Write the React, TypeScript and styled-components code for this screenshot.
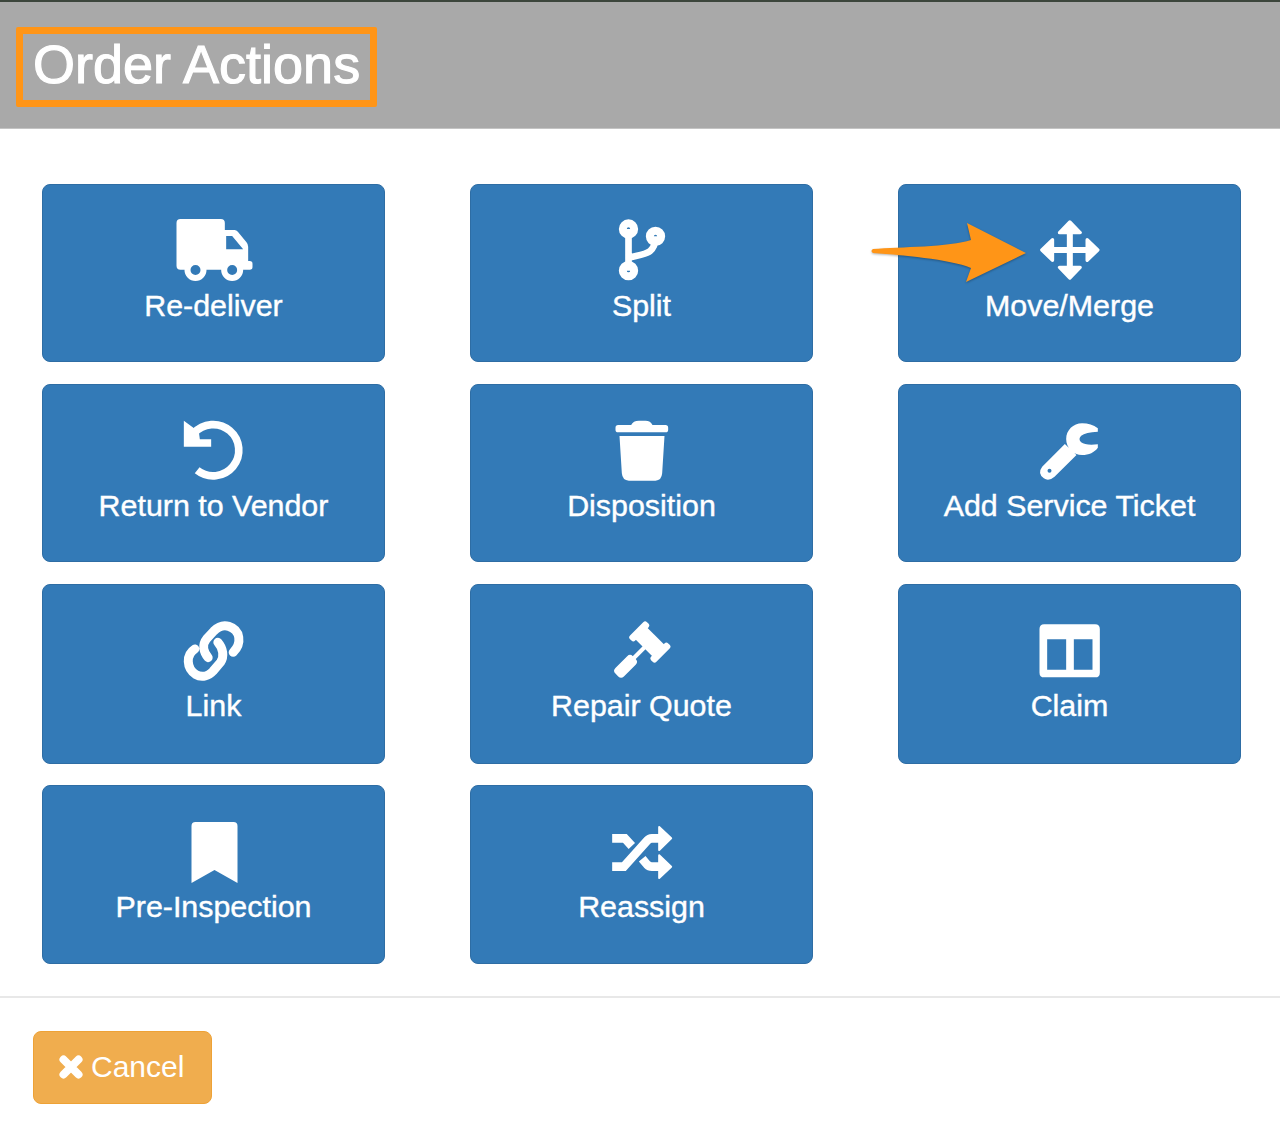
import React from "react";
import styled, { createGlobalStyle } from "styled-components";

const BLUE = "#337ab7";

const Global = createGlobalStyle`
  html, body { margin: 0; padding: 0; background: #fff; }
  body { font-family: "Liberation Sans", Arial, sans-serif; }
`;

const Page = styled.div`
  position: relative;
  width: 1280px;
  height: 1121px;
  background: #fff;
  overflow: hidden;
`;

const Header = styled.header`
  box-sizing: border-box;
  height: 129px;
  padding: 25px 0 0 16px;
  background: #a9a9a9;
  border-top: 2px solid #3c463c;
  border-bottom: 1px solid #c4c4c4;
`;

const Title = styled.h1`
  box-sizing: border-box;
  display: inline-block;
  width: 361px;
  height: 80px;
  margin: 0;
  padding: 0 0 0 10px;
  border: 7px solid #ff9517;
  border-radius: 2px;
  color: #fff;
  font-size: 54px;
  font-weight: 400;
  line-height: 61px;
  white-space: nowrap;
  -webkit-text-stroke: 1.1px #fff;
`;

const Grid = styled.main`
  display: grid;
  grid-template-columns: repeat(3, 343px);
  grid-template-rows: 178px 178px 180px 178.75px;
  column-gap: 85px;
  row-gap: 21.75px;
  padding: 55px 0 0 42px;
`;

const ActionButton = styled.button`
  box-sizing: border-box;
  display: flex;
  flex-direction: column;
  align-items: center;
  padding: 20px 0 0;
  background: ${BLUE};
  border: 1px solid #2e6da4;
  border-radius: 8px;
  color: #fff;
  font-family: inherit;
`;

const Icon = styled.svg`
  display: block;
  width: 110px;
  height: 90px;
  flex: none;
`;

const Label = styled.span`
  font-size: 30.4px;
  line-height: 20px;
  white-space: nowrap;
  -webkit-text-stroke: 0.4px #fff;
`;

const Footer = styled.footer`
  margin-top: 32px;
  padding: 33px 0 0 33px;
  border-top: 2px solid #e8e8e8;
`;

const CancelButton = styled.button`
  box-sizing: border-box;
  display: flex;
  align-items: center;
  gap: 8px;
  width: 179px;
  height: 73px;
  padding: 0 0 2px 25px;
  background: #f0ad4e;
  border: 1px solid #eea236;
  border-radius: 8px;
  color: #fff;
  font-family: inherit;
  font-size: 30px;
`;

const CancelIcon = styled.svg`
  display: block;
  width: 24px;
  height: 24px;
  flex: none;
`;

const ArrowOverlay = styled.svg`
  position: absolute;
  left: 860px;
  top: 210px;
  width: 180px;
  height: 85px;
  filter: drop-shadow(0 1px 1px rgba(0, 0, 0, 0.3));
`;

const W = "#fff";

const Truck = () => (
  <>
    <path
      fill={W}
      fillRule="evenodd"
      d="M60 42H181Q193 42 193 54V75H222Q228 75 232 80L258 112Q263 118 263 125V168H268Q276 168 276 176V186Q276 194 268 194H100L60 194Q48 194 48 182V54Q48 42 60 42ZM197 93V133H248L215 93Z"
    />
    <circle cx="105" cy="195" r="24" fill={BLUE} stroke={W} strokeWidth="18" />
    <circle cx="215" cy="195" r="24" fill={BLUE} stroke={W} strokeWidth="18" />
  </>
);

const Split = () => (
  <>
    <path fill="none" stroke={W} strokeWidth="20" d="M114 72V197M195 94C195 150 160 146 114 158" />
    <path
      fill={W}
      fillRule="evenodd"
      d="M85 72a29 29 0 1 0 58 0a29 29 0 1 0-58 0ZM109 72a5 5 0 1 1 10 0a5 5 0 1 1-10 0ZM166 94a29 29 0 1 0 58 0a29 29 0 1 0-58 0ZM190 94a5 5 0 1 1 10 0a5 5 0 1 1-10 0ZM85 197a29 29 0 1 0 58 0a29 29 0 1 0-58 0ZM109 197a5 5 0 1 1 10 0a5 5 0 1 1-10 0Z"
    />
  </>
);

const Move = () => (
  <path
    fill={W}
    stroke={W}
    strokeWidth="10"
    strokeLinejoin="round"
    transform="translate(148 135)"
    d="M0-84L31-52H4V-4H52V-31L84 0L52 31V4H4V52H31L0 84L-31 52H-4V4H-52V31L-84 0L-52-31V-4H-4V-52H-31Z"
  />
);

const Undo = () => (
  <>
    <path fill="none" stroke={W} strokeWidth="23" d="M100 85A77 77 0 1 1 110 196" />
    <path fill={W} d="M70 47L152 103V125H70ZM70 47L115 80L118 103H152Z" />
  </>
);

const Trash = () => (
  <path
    fill={W}
    d="M83 60H122Q128 47 145 47H165Q180 47 186 60H225Q233 60 233 68V74Q233 82 225 82H83Q75 82 75 74V68Q75 60 83 60ZM87 93H222L215 205Q213 227 195 227H115Q96 227 94 205Z"
  />
);

const Wrench = () => (
  <>
    <path
      fill={W}
      d="M232 70Q212 55 185 55C158 55 137 76 137 102C137 128 158 150 185 150C205 150 222 142 232 128V118Q195 122 182 112Q172 102 182 92Q195 82 232 80ZM133 117L65 185Q50 205 70 220Q85 230 102 215L168 150Z"
    />
    <circle cx="87" cy="197" r="6" fill={BLUE} />
  </>
);

const LinkIcon = () => (
  <path
    fill="none"
    stroke={W}
    strokeWidth="27"
    strokeLinecap="round"
    d="M218 142C245 115 240 75 205 64C185 58 172 66 160 78L138 102C125 118 128 140 143 158M103 132C75 150 78 190 105 208C125 220 145 212 158 198L180 172C192 155 188 130 172 112"
  />
);

const Gavel = () => (
  <g fill={W} transform="translate(178 111) rotate(45)">
    <rect x="-56" y="-36" width="22" height="72" rx="8" />
    <rect x="34" y="-36" width="22" height="72" rx="8" />
    <rect x="-42" y="-25" width="84" height="50" />
    <rect x="-6" y="20" width="12" height="50" />
    <rect x="-18" y="66" width="36" height="74" rx="12" />
  </g>
);

const Columns = () => (
  <path
    fill={W}
    fillRule="evenodd"
    d="M71 58H224Q238 58 238 72V203Q238 217 224 217H71Q57 217 57 203V72Q57 58 71 58ZM80 103V194H137V103ZM160 103V194H216V103Z"
  />
);

const Bookmark = () => (
  <path fill={W} d="M93 60Q93 48 105 48H219Q231 48 231 60V231L162 192L93 231Z" />
);

const Shuffle = () => (
  <>
    <path
      fill="none"
      stroke={W}
      strokeWidth="26"
      d="M65 97H103L124 120M65 182H100L170 104Q176 97 184 97H210M155 158L170 176Q176 182 184 182H210"
    />
    <path
      fill={W}
      stroke={W}
      strokeWidth="6"
      strokeLinejoin="round"
      d="M206 63L242 97L206 132ZM206 148L242 182L206 216Z"
    />
  </>
);

const actions: { label: string; shift: number; icon: React.ReactNode }[] = [
  { label: "Re-deliver", shift: 4.5, icon: <Truck /> },
  { label: "Split", shift: 10.5, icon: <Split /> },
  { label: "Move/Merge", shift: 16.5, icon: <Move /> },
  { label: "Return to Vendor", shift: 4.5, icon: <Undo /> },
  { label: "Disposition", shift: 10.5, icon: <Trash /> },
  { label: "Add Service Ticket", shift: 16.5, icon: <Wrench /> },
  { label: "Link", shift: 4.5, icon: <LinkIcon /> },
  { label: "Repair Quote", shift: 10.5, icon: <Gavel /> },
  { label: "Claim", shift: 16.5, icon: <Columns /> },
  { label: "Pre-Inspection", shift: 4.5, icon: <Bookmark /> },
  { label: "Reassign", shift: 10.5, icon: <Shuffle /> },
];

export default function App() {
  return (
    <Page>
      <Global />
      <Header>
        <Title>Order Actions</Title>
      </Header>
      <Grid>
        {actions.map((a) => (
          <ActionButton key={a.label}>
            <Icon viewBox={`${-a.shift} 0 330 270`}>{a.icon}</Icon>
            <Label>{a.label}</Label>
          </ActionButton>
        ))}
      </Grid>
      <Footer>
        <CancelButton>
          <CancelIcon viewBox="0 0 24 24">
            <path d="M4.5 4.5L19.5 19.5M19.5 4.5L4.5 19.5" stroke="#fff" strokeWidth="8" strokeLinecap="round" />
          </CancelIcon>
          Cancel
        </CancelButton>
      </Footer>
      <ArrowOverlay viewBox="860 210 180 85">
        <path
          fill="#ff9517"
          d="M873 249C900 247 950 247 971 240L967 223L1026 253L966 282L971 268C950 259 900 255 873 253Q870 251 873 249Z"
        />
      </ArrowOverlay>
    </Page>
  );
}
